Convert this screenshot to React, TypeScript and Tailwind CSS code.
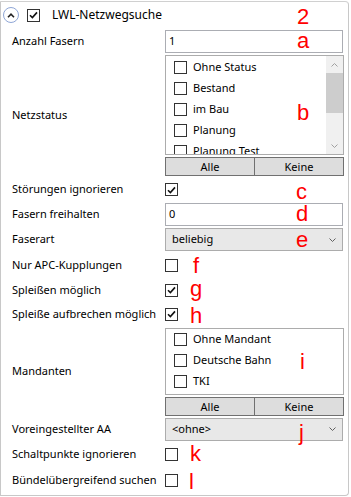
import React from 'react';

const Check = ({ checked }: { checked?: boolean }) => (
  <span className="flex h-[13px] w-[13px] shrink-0 items-center justify-center border border-[#333333] bg-white">
    {checked && (
      <svg width="9" height="8" viewBox="0 0 9 8">
        <path d="M1 4.2 L3.4 6.6 L8 1.4" fill="none" stroke="#111" strokeWidth="1.6" />
      </svg>
    )}
  </span>
);

const Chevron = () => (
  <svg width="7" height="4" viewBox="0 0 7 4" className="mr-[6px]">
    <path d="M0.5 0.5 L3.5 3.5 L6.5 0.5" fill="none" stroke="#606060" strokeWidth="1" />
  </svg>
);

const Label = ({ children }: { children: React.ReactNode }) => (
  <div className="w-[164px] shrink-0 whitespace-nowrap pl-[11px]">{children}</div>
);

const Row = ({ h, label, children }: { h: string; label: string; children: React.ReactNode }) => (
  <div className={`flex items-center ${h}`}>
    <Label>{label}</Label>
    <div className="flex flex-1 items-center pr-[5px]">{children}</div>
  </div>
);

const TextBox = ({ value }: { value: string }) => (
  <div className="h-[23px] w-full border border-[#abadb3] bg-white pl-[3px] pt-[1px] leading-[18px]">{value}</div>
);

const Combo = ({ value }: { value: string }) => (
  <div className="flex h-[23px] w-full items-center justify-between border border-[#acacac] bg-[#e8e8e8] pl-[6px]">
    <span>{value}</span>
    <Chevron />
  </div>
);

const Buttons = () => (
  <div className="mt-[2px] flex h-[19px] w-full">
    <div className="flex flex-1 items-center justify-center border border-[#707070] bg-[#dddddd] leading-none">Alle</div>
    <div className="-ml-px flex flex-1 items-center justify-center border border-[#707070] bg-[#dddddd] leading-none">Keine</div>
  </div>
);

const ListItem = ({ text }: { text: string }) => (
  <div className="flex h-[21px] shrink-0 items-center gap-[6px] pl-[8px]">
    <Check />
    <span>{text}</span>
  </div>
);

const Red = ({ c, cls }: { c: string; cls: string }) => (
  <span className={`absolute text-[22px] leading-none text-[#ff0000] ${cls}`}>{c}</span>
);

export default function App() {
  return (
    <div
      className="relative h-[497px] w-[351px] bg-white text-[11px] text-black"
      style={{ fontFamily: '"Noto Sans", sans-serif' }}
    >
      <div className="relative mt-px h-[495px] w-[349px] rounded-tr-[4px] rounded-br-[4px] border border-[#c8c8c8] border-t-[#d0d0d0]">
        <div className="flex h-[26px] items-center gap-[8px] pl-[2px]">
          <span className="flex h-[16px] w-[16px] items-center justify-center rounded-full border border-[#8fa6d6] bg-white">
            <svg width="8" height="5" viewBox="0 0 8 5">
              <path d="M1 4.2 L4 1.2 L7 4.2" fill="none" stroke="#222" strokeWidth="1.6" />
            </svg>
          </span>
          <Check checked />
          <span className="ml-[4px] text-[12px]">LWL-Netzwegsuche</span>
        </div>

        <Row h="h-[26px]" label="Anzahl Fasern">
          <TextBox value="1" />
        </Row>

        <div className="flex h-[123px] items-center">
          <Label>Netzstatus</Label>
          <div className="flex flex-1 flex-col self-start pr-[4px] pt-[1px]">
            <div className="flex h-[100px] w-full overflow-hidden border border-[#acacac] bg-white">
              <div className="flex flex-1 flex-col overflow-hidden pt-[1px]">
                <ListItem text="Ohne Status" />
                <ListItem text="Bestand" />
                <ListItem text="im Bau" />
                <ListItem text="Planung" />
                <ListItem text="Planung Test" />
              </div>
              <div className="flex w-[17px] flex-col items-center bg-[#f0f0f0]">
                <div className="flex h-[17px] items-center justify-center">
                  <svg width="7" height="4" viewBox="0 0 7 4">
                    <path d="M0.5 3.5 L3.5 0.5 L6.5 3.5" fill="none" stroke="#a0a0a0" strokeWidth="1" />
                  </svg>
                </div>
                <div className="h-[40px] w-full bg-[#cdcdcd]" />
                <div className="flex-1" />
                <div className="flex h-[17px] items-center justify-center">
                  <svg width="7" height="4" viewBox="0 0 7 4">
                    <path d="M0.5 0.5 L3.5 3.5 L6.5 0.5" fill="none" stroke="#a0a0a0" strokeWidth="1" />
                  </svg>
                </div>
              </div>
            </div>
            <Buttons />
          </div>
        </div>

        <Row h="h-[25px]" label="Störungen ignorieren">
          <Check checked />
        </Row>
        <Row h="h-[25px]" label="Fasern freihalten">
          <TextBox value="0" />
        </Row>
        <Row h="h-[25px]" label="Faserart">
          <Combo value="beliebig" />
        </Row>
        <Row h="h-[26px]" label="Nur APC-Kupplungen">
          <Check />
        </Row>
        <Row h="h-[24px]" label="Spleißen möglich">
          <Check checked />
        </Row>
        <Row h="h-[24px]" label="Spleiße aufbrechen möglich">
          <Check checked />
        </Row>

        <div className="flex h-[90px] items-center">
          <Label>Mandanten</Label>
          <div className="flex flex-1 flex-col self-start pr-[4px] pt-[2px]">
            <div className="flex h-[67px] w-full flex-col overflow-hidden border border-[#acacac] bg-white">
              <ListItem text="Ohne Mandant" />
              <ListItem text="Deutsche Bahn" />
              <ListItem text="TKI" />
            </div>
            <Buttons />
          </div>
        </div>

        <Row h="h-[26px]" label="Voreingestellter AA">
          <Combo value="<ohne>" />
        </Row>
        <Row h="h-[25px]" label="Schaltpunkte ignorieren">
          <Check />
        </Row>
        <Row h="h-[26px]" label="Bündelübergreifend suchen">
          <Check />
        </Row>
      </div>

      <div style={{ fontFamily: '"Liberation Sans", Arial, sans-serif' }}>
        <Red c="2" cls="left-[297px] top-[5px]" />
        <Red c="a" cls="left-[297px] top-[29px]" />
        <Red c="b" cls="left-[297px] top-[101px]" />
        <Red c="c" cls="left-[296px] top-[180px]" />
        <Red c="d" cls="left-[296px] top-[202px]" />
        <Red c="e" cls="left-[296px] top-[228px]" />
        <Red c="f" cls="left-[193px] top-[254px]" />
        <Red c="g" cls="left-[190px] top-[277px]" />
        <Red c="h" cls="left-[190px] top-[304px]" />
        <Red c="i" cls="left-[300px] top-[350px]" />
        <Red c="j" cls="left-[299px] top-[421px]" />
        <Red c="k" cls="left-[190px] top-[442px]" />
        <Red c="l" cls="left-[189px] top-[470px]" />
      </div>
    </div>
  );
}
